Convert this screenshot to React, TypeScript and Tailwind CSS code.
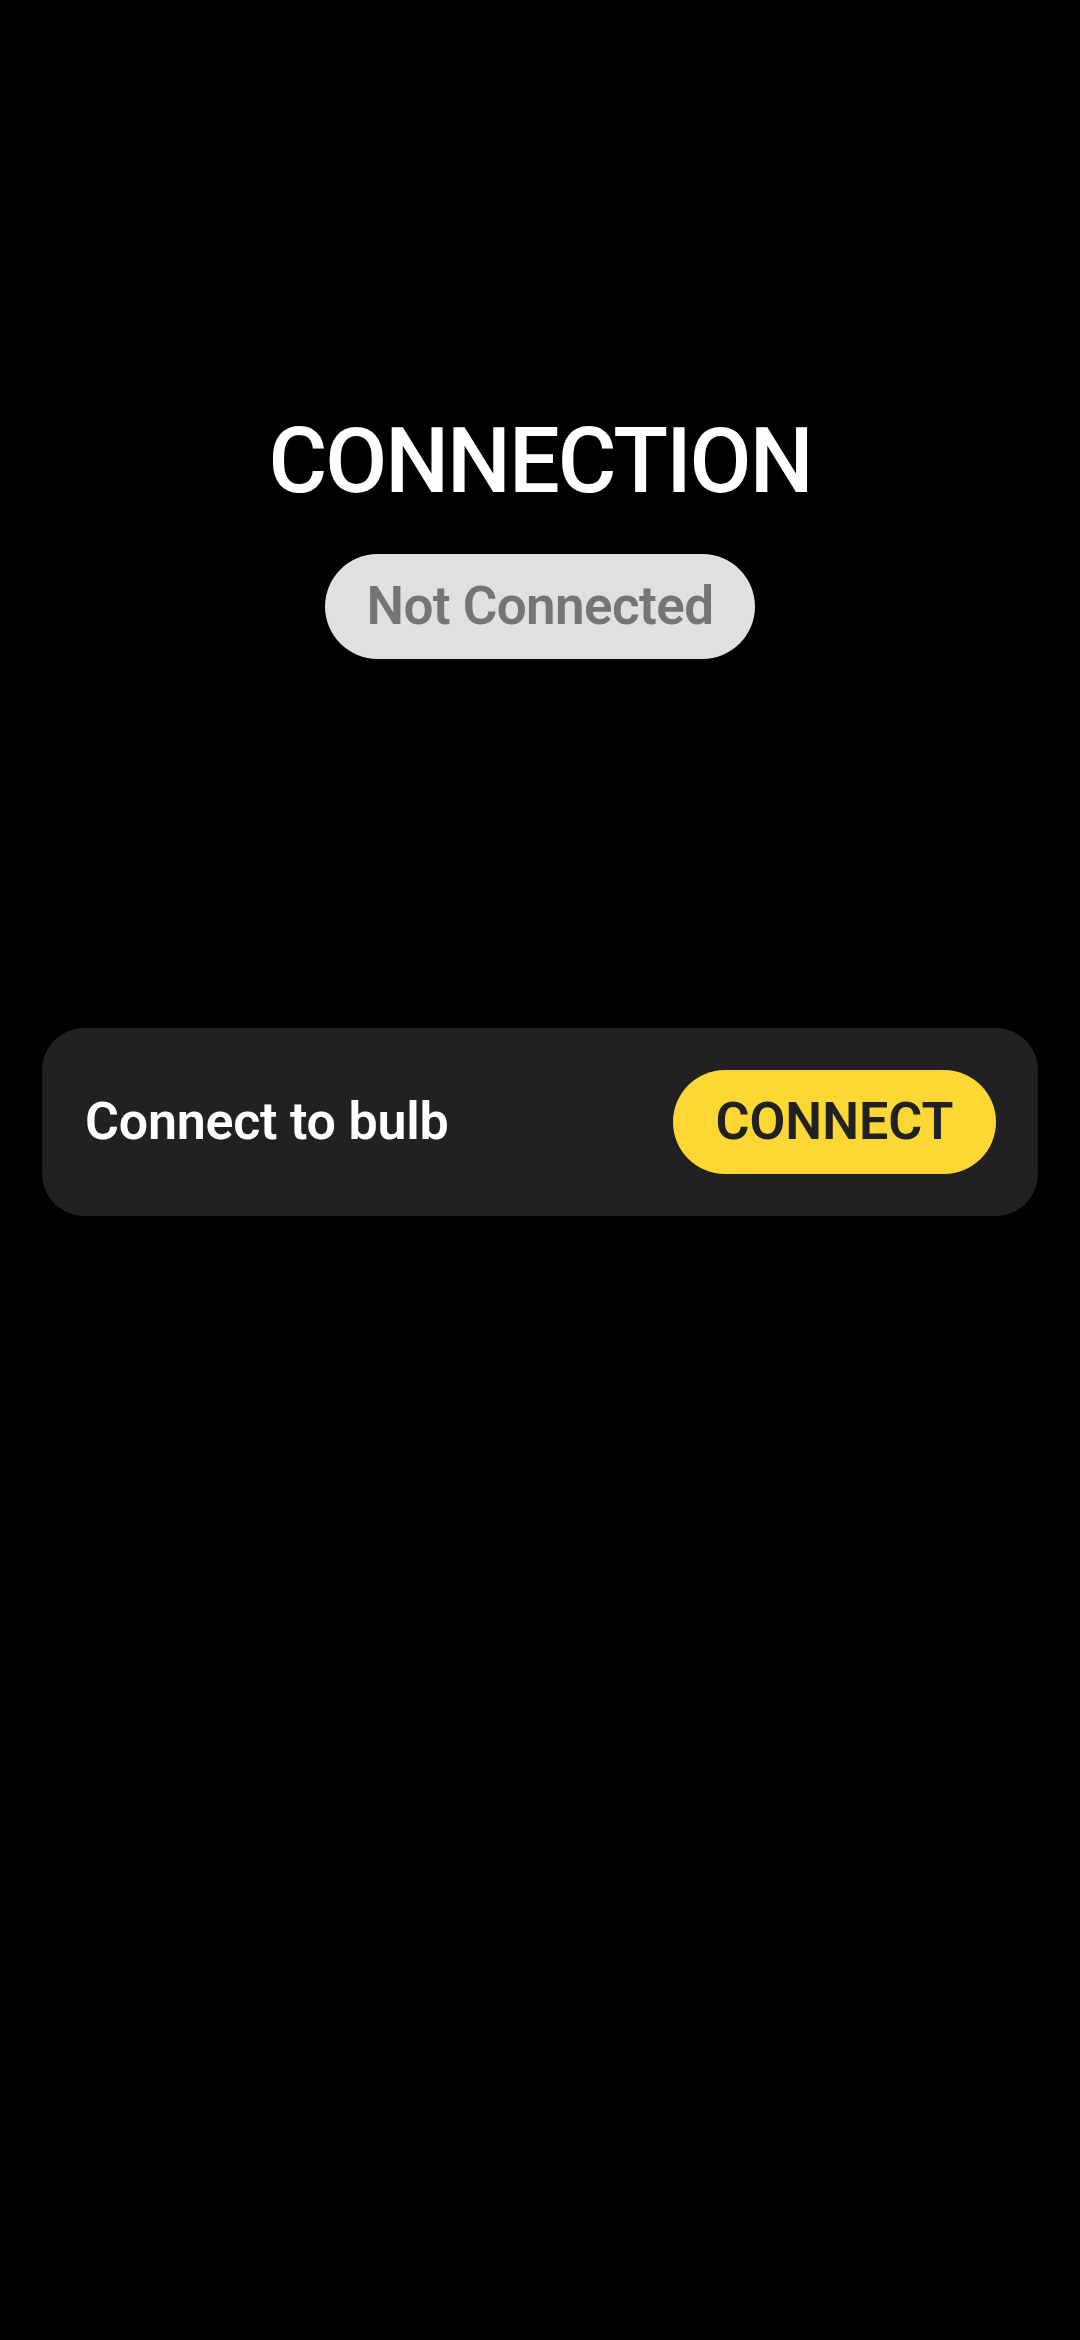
import React from "react";

export default function App() {
  return (
    <div
      className="w-[1080px] h-[2340px] bg-black flex flex-col items-center"
      style={{ fontFamily: "Roboto, 'Noto Sans', sans-serif" }}
    >
      <h1 className="mt-[409px] text-[90px] leading-[106px] font-medium tracking-[-2px] text-white">
        CONNECTION
      </h1>
      <div className="mt-[39px] h-[105px] w-[430px] rounded-full bg-[#e0e0e0] flex items-center justify-center">
        <span className="text-[53px] leading-none font-semibold tracking-[-0.6px] text-[#757575]">
          Not Connected
        </span>
      </div>
      <div className="mt-[369px] w-[996px] rounded-[42px] bg-[#212121] p-[42px] flex items-center justify-between">
        <span className="pl-[1px] text-[52px] leading-none font-semibold tracking-[-0.25px] text-white">
          Connect to bulb
        </span>
        <button className="h-[104px] w-[323px] rounded-full bg-[#fdd835] flex items-center justify-center">
          <span className="text-[52px] leading-none font-semibold text-[#212121]">
            CONNECT
          </span>
        </button>
      </div>
    </div>
  );
}
